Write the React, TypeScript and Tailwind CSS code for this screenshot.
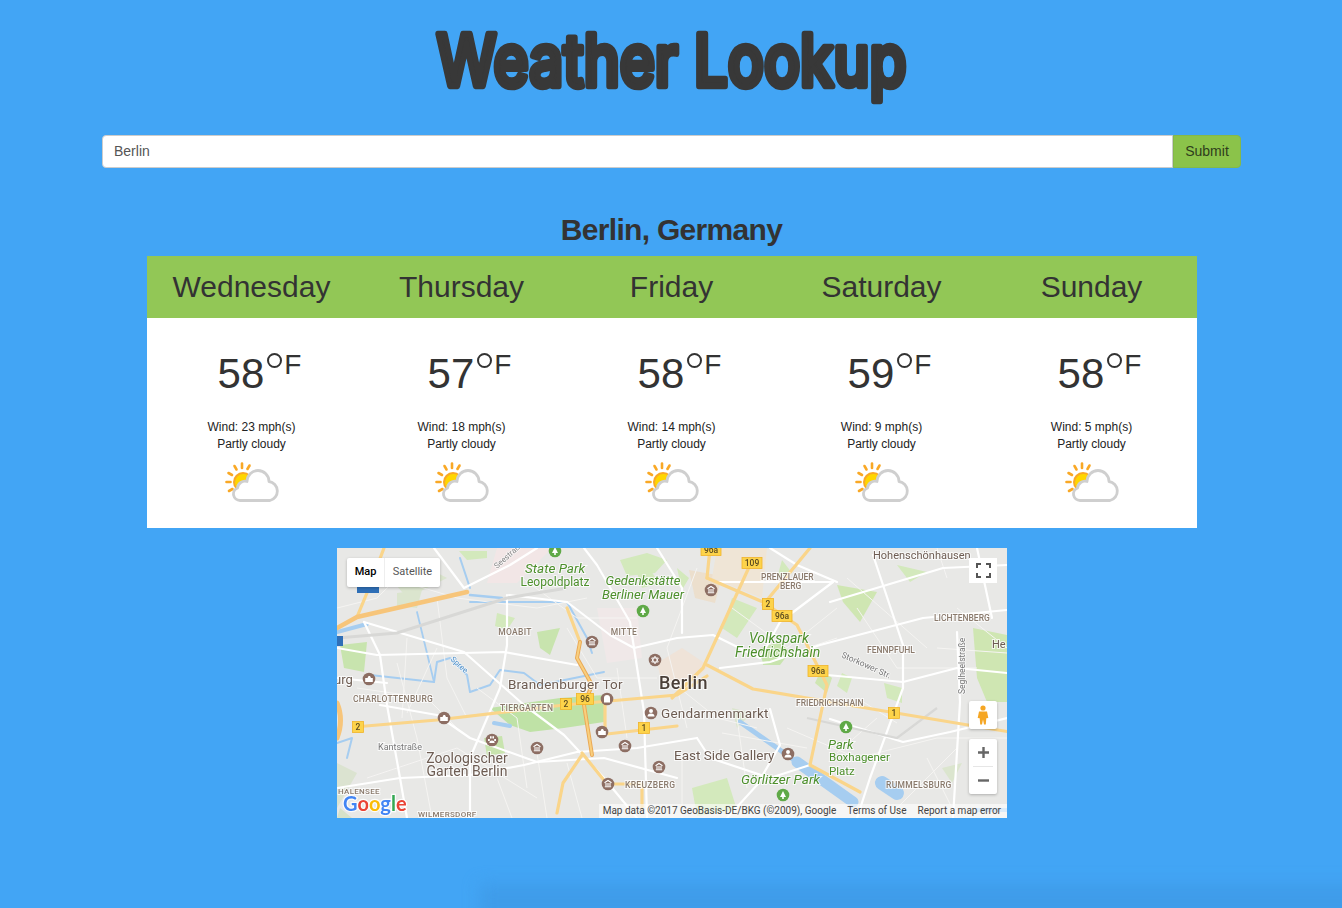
import React from "react";

const days = [
  { d: "Wednesday", t: 58, w: 23 },
  { d: "Thursday", t: 57, w: 18 },
  { d: "Friday", t: 58, w: 14 },
  { d: "Saturday", t: 59, w: 9 },
  { d: "Sunday", t: 58, w: 5 },
];

function WeatherIcon() {
  const rays = ["M1.5 20h4", "M3.5 11l3.5 2", "M9.5 4l2 3.5", "M17 1.5v4.5", "M24.5 3.5l-2 3.5", "M4 29l3.5-2"];
  return (
    <svg width="54" height="40" viewBox="0 0 54 40" className="block">
      {rays.map((r) => (
        <path key={r} d={r} stroke="#f9a825" strokeWidth="2.6" strokeLinecap="round" fill="none" />
      ))}
      <circle cx="18" cy="20" r="10" fill="#f9a825" />
      <circle cx="18.5" cy="20.5" r="8.5" fill="#ffd600" />
      <path
        d="M15 38.5A6.5 6.5 0 0 1 12.5 26A7.5 7.5 0 0 1 22 19.5A11 11 0 0 1 44 19.5A9.7 9.7 0 0 1 45 38.5Z"
        fill="#fff"
        stroke="#cfcfcf"
        strokeWidth="2.8"
        strokeLinejoin="round"
      />
    </svg>
  );
}

const whites = [
  "M27 74L43 107 50 157 63 230 70 270",
  "M170 47L170 97 163 140 133 210 133 270",
  "M97 0L127 40 173 17 200 0",
  "M172 47L230 54",
  "M40 107L167 104 240 117",
  "M27 74L127 104 187 157 227 187 267 230 300 270",
  "M43 157L100 167 133 190 200 214 267 210 340 230",
  "M63 230L133 227 187 217 240 204",
  "M297 100L307 164 310 270",
  "M230 54L273 87 297 100 340 90 376 87 423 110",
  "M247 0L260 17 293 74 297 100",
  "M383 120L433 114 483 97 586 70 670 62",
  "M536 7L566 97 566 140 533 230 520 270",
  "M496 34L443 74 423 110",
  "M490 127L566 134 620 120 670 125",
  "M380 34L496 34",
  "M670 17L606 20 493 54",
  "M620 84L623 154 616 270",
  "M433 0L460 17 500 34",
  "M493 171L566 194 613 184 670 170",
  "M433 161L443 197 420 237",
  "M360 190L373 210 433 230 473 217",
  "M0 100L40 107",
  "M0 240L63 230",
  "M0 130L50 135",
  "M320 0L345 40 345 85",
  "M640 0L655 70",
  "M240 204L300 200 360 190",
  "M420 237L390 270",
];

const thin = [
  "M20 20L120 50 200 60 250 50",
  "M100 50L110 130 130 170",
  "M60 115L80 190 95 270",
  "M230 80L260 130 320 130",
  "M360 20L330 100 350 180",
  "M520 60L560 120 640 120",
  "M450 180L520 210 600 190 670 190",
  "M590 210L620 270",
  "M30 230L120 200 200 250",
  "M395 60L450 100 500 60",
  "M185 30L240 70 300 70",
  "M140 140L180 170 190 240",
  "M100 100L70 165",
  "M400 170L410 240",
  "M620 60L670 100",
  "M0 60L40 50 70 20",
  "M70 90L65 170",
  "M200 205L210 270",
  "M20 140L90 150 120 180",
  "M280 120L290 190",
  "M385 185L470 200",
  "M510 30L590 100",
  "M610 30L600 0",
  "M440 110L500 90",
  "M500 205L540 170",
  "M560 260L620 200",
  "M330 130L380 170 420 180",
  "M345 205L345 270",
  "M160 230L175 270",
  "M230 215L245 270",
  "M600 100L670 105",
  "M520 150L560 175",
];

const parks: [string, string][] = [
  ["M3 97L30 94 27 124 7 120z", "#c8e4ae"],
  ["M200 84L223 80 213 107 203 100z", "#c8e4ae"],
  ["M153 160L223 150 267 147 267 174 227 180 193 184 173 177z", "#bfe2a6"],
  ["M147 190L165 188 168 205 150 208z", "#c8e4ae"],
  ["M423 100L443 94 453 104 443 117 426 117z", "#c8e4ae"],
  ["M500 37L540 44 523 74 506 54z", "#cfe6b2"],
  ["M636 80L670 87 670 154 650 154 640 130z", "#cfe6b2"],
  ["M560 17L590 24 573 34z", "#d3e9bc"],
  ["M283 12L310 5 330 12 318 25 290 28z", "#d3e9bc"],
  ["M122 3L150 3 150 10 130 12z", "#d3e9bc"],
  ["M55 32L95 22 110 30 70 50z", "#dbe5ce"],
  ["M340 20L352 30 345 42z", "#d3e9bc"],
  ["M3 260L15 270 0 270z", "#d6e2c8"],
  ["M485 120L495 130 490 145 478 135z", "#cfe6b2"],
  ["M352 22L385 28 378 55 358 50z", "#ecdfcd"],
  ["M0 215L20 225 0 260z", "#dbe3d0"],
  ["M355 240L390 230 400 262 360 268z", "#d3e9bc"],
  ["M395 50L420 60 400 90 385 80z", "#d3e9bc"],
  ["M505 125L515 130 510 145 500 138z", "#d3e9bc"],
  ["M547 135L565 140 565 155 550 150z", "#d3e9bc"],
  ["M445 12L455 25 440 30z", "#d3e9bc"],
  ["M300 25L312 20 322 35 305 40z", "#d3e9bc"],
  ["M160 65L178 70 170 82 158 78z", "#d3e9bc"],
  ["M60 45L85 42 80 60 60 58z", "#dbe5ce"],
  ["M395 160L415 165 400 180z", "#dbe5ce"],
  ["M605 220L625 215 615 235z", "#dbe5ce"],
];

const labels: { x: number; y: number; t: string; c: string; s: number; a?: "middle"; i?: boolean; w?: number; ls?: number }[] = [
  { x: 218, y: 25, t: "State Park", c: "#4d8f2c", s: 13.5, a: "middle", i: true },
  { x: 218, y: 38, t: "Leopoldplatz", c: "#4d8f2c", s: 12, a: "middle" },
  { x: 306, y: 37, t: "Gedenkstätte", c: "#4d8f2c", s: 13, a: "middle", i: true },
  { x: 306, y: 51, t: "Berliner Mauer", c: "#4d8f2c", s: 13, a: "middle", i: true },
  { x: 178, y: 87, t: "MOABIT", c: "#8a7a6c", s: 8.5, a: "middle", w: 500, ls: 0.3 },
  { x: 287, y: 87, t: "MITTE", c: "#8a7a6c", s: 8.5, a: "middle", w: 500, ls: 0.3 },
  { x: -3, y: 136, t: "urg", c: "#6d5c52", s: 13 },
  { x: 16, y: 154, t: "CHARLOTTENBURG", c: "#8a7a6c", s: 8.5, w: 500, ls: 0.3 },
  { x: 171, y: 141, t: "Brandenburger Tor", c: "#6d5c52", s: 13.5, ls: 0.2 },
  { x: 163, y: 163, t: "TIERGARTEN", c: "#8a7a6c", s: 8.5, w: 500, ls: 0.3 },
  { x: 41, y: 202, t: "Kantstraße", c: "#777", s: 9 },
  { x: 130, y: 215, t: "Zoologischer", c: "#6d5c52", s: 14, a: "middle" },
  { x: 130, y: 228, t: "Garten Berlin", c: "#6d5c52", s: 14, a: "middle" },
  { x: 1, y: 246, t: "HALENSEE", c: "#8a7a6c", s: 8, w: 500, ls: 0.3 },
  { x: 81, y: 269, t: "WILMERSDORF", c: "#8a7a6c", s: 8, w: 500, ls: 0.3 },
  { x: 288, y: 240, t: "KREUZBERG", c: "#8a7a6c", s: 8.5, w: 500, ls: 0.3 },
  { x: 322, y: 141, t: "Berlin", c: "#4a3f38", s: 18, w: 500, ls: 0.4 },
  { x: 324, y: 170, t: "Gendarmenmarkt", c: "#6d5c52", s: 13.5, ls: 0.2 },
  { x: 337, y: 212, t: "East Side Gallery", c: "#6d5c52", s: 13.5 },
  { x: 404, y: 236, t: "Görlitzer Park", c: "#4d8f2c", s: 13.5, i: true },
  { x: 412, y: 95, t: "Volkspark", c: "#4d8f2c", s: 14, i: true },
  { x: 398, y: 109, t: "Friedrichshain", c: "#4d8f2c", s: 14, i: true },
  { x: 491, y: 201, t: "Park", c: "#4d8f2c", s: 13, i: true },
  { x: 492, y: 213, t: "Boxhagener", c: "#4d8f2c", s: 11.5 },
  { x: 492, y: 227, t: "Platz", c: "#4d8f2c", s: 11.5 },
  { x: 424, y: 32, t: "PRENZLAUER", c: "#8a7a6c", s: 8.5, w: 500 },
  { x: 443, y: 41, t: "BERG", c: "#8a7a6c", s: 8.5, w: 500 },
  { x: 530, y: 105, t: "FENNPFUHL", c: "#8a7a6c", s: 8.5, w: 500 },
  { x: 459, y: 158, t: "FRIEDRICHSHAIN", c: "#8a7a6c", s: 8.5, w: 500 },
  { x: 549, y: 240, t: "RUMMELSBURG", c: "#8a7a6c", s: 8.5, w: 500, ls: 0.3 },
  { x: 597, y: 73, t: "LICHTENBERG", c: "#8a7a6c", s: 8.5, w: 500 },
  { x: 536, y: 11, t: "Hohenschönhausen", c: "#6d5c52", s: 11 },
  { x: 655, y: 100, t: "He", c: "#6d5c52", s: 11 },
];

const pois: [number, number, string][] = [
  [255, 94, "m"], [318, 112, "s"], [32, 131, "c"], [107, 170, "c"], [155, 192, "p"], [200, 200, "m"],
  [270, 151, "t"], [314, 165, "g"], [265, 184, "c"], [288, 198, "m"], [322, 219, "m"], [271, 236, "m"], [374, 42, "m"], [451, 206, "g"],
];

function Poi({ x, y, k }: { x: number; y: number; k: string }) {
  return (
    <g>
      <circle cx={x} cy={y} r="6.3" fill="#8d6e63" />
      {k === "m" && <path d={`M${x - 3.5} ${y - 1.2}L${x} ${y - 3.5}L${x + 3.5} ${y - 1.2}M${x - 3.2} ${y + 2.8}H${x + 3.2}M${x - 2} ${y - 1}V${y + 2}M${x} ${y - 1}V${y + 2}M${x + 2} ${y - 1}V${y + 2}`} stroke="#fff" strokeWidth="1.1" fill="none" />}
      {k === "s" && <path d={`M${x} ${y - 3.8}L${x + 3.3} ${y + 2}H${x - 3.3}zM${x} ${y + 3.8}L${x + 3.3} ${y - 2}H${x - 3.3}z`} stroke="#fff" strokeWidth="0.9" fill="none" />}
      {k === "c" && <path d={`M${x - 3.8} ${y + 3}V${y - 1}H${x - 1.5}L${x - 0.5} ${y - 3}H${x + 1}L${x + 2} ${y - 1}H${x + 3.8}V${y + 3}z`} fill="#fff" />}
      {k === "p" && <path d={`M${x - 2.6} ${y + 3}a2.6 2.4 0 0 1 5.2 0zM${x - 4} ${y - 1}h1.8v2h-1.8zM${x + 2.2} ${y - 1}h1.8v2h-1.8zM${x - 2} ${y - 3.8}h1.6v2.2h-1.6zM${x + 0.4} ${y - 3.8}h1.6v2.2h-1.6z`} fill="#fff" />}
      {k === "t" && <path d={`M${x - 3} ${y + 3.5}V${y - 1}A3 3 0 0 1 ${x + 3} ${y - 1}V${y + 3.5}z`} fill="#fff" />}
      {k === "g" && <path d={`M${x - 3.5} ${y + 3.5}a3.5 3 0 0 1 7 0zM${x - 2} ${y - 2}a2 2 0 1 0 4 0a2 2 0 1 0-4 0z`} fill="#fff" />}
    </g>
  );
}

function Tree({ x, y }: { x: number; y: number }) {
  return (
    <g>
      <circle cx={x} cy={y} r="6.3" fill="#5fa947" />
      <path d={`M${x} ${y - 4}L${x + 3} ${y + 2}H${x + 0.8}V${y + 4}H${x - 0.8}V${y + 2}H${x - 3}z`} fill="#fff" />
    </g>
  );
}

function Shield({ x, y, t }: { x: number; y: number; t: string }) {
  const w = t.length > 2 ? 20 : t.length === 2 ? 17 : 11;
  return (
    <g>
      <rect x={x - w / 2} y={y - 5.5} width={w} height="11" fill="#fdd34a" stroke="#f0b429" strokeWidth="0.8" />
      <text x={x} y={y + 3} textAnchor="middle" fontSize="8.5" fill="#5a4a20" fontFamily="Roboto, sans-serif" fontWeight="500">{t}</text>
    </g>
  );
}

function MapArt() {
  const haloText = { stroke: "#fff", strokeOpacity: 0.7, strokeWidth: 1.5, paintOrder: "stroke" as const };
  return (
    <svg width="670" height="270" viewBox="0 0 670 270" className="absolute inset-0 block blur-[0.45px]" fontFamily="Roboto, sans-serif">
      <rect width="670" height="270" fill="#e8e8e6" />
      {parks.map(([d, c], i) => <path key={i} d={d} fill={c} />)}
      <path d="M160 0L215 0 180 35 150 35z" fill="#f2e6e6" />
      <path d="M260 60L300 60 305 110 270 115z" fill="#f0e8e8" />
      <path d="M320 115L345 100 372 118 350 140 325 135z" fill="#efe3d8" />
      <path d="M380 0L430 0 425 50 375 30z" fill="#efe5d6" />
      <g fill="none" stroke="#a6cdf0" strokeLinejoin="round" strokeLinecap="round">
        <path d="M33 127L97 134 100 114 113 110 130 127 133 144 153 137 163 122 187 125 203 137 267 124" strokeWidth="2" />
        <path d="M80 64L97 134" strokeWidth="1.8" />
        <path d="M123 10L133 40M133 54L167 54 230 54 250 90 255 105" strokeWidth="2" />
        <path d="M133 47L165 50" strokeWidth="2.5" />
        <path d="M157 175L173 178" strokeWidth="4" />
        <path d="M0 195L15 190 10 210" strokeWidth="2" />
        <path d="M0 84L30 76" strokeWidth="4" />
        <path d="M403 174L460 214" strokeWidth="5" />
        <path d="M460 214L516 254" strokeWidth="11" />
        <path d="M545 235L560 245" strokeWidth="14" />
        <path d="M640 262L670 262" strokeWidth="4" />
      </g>
      <g fill="none" stroke="#f5f4f2" strokeWidth="1">
        {thin.map((d) => <path key={d} d={d} />)}
      </g>
      <g fill="none" stroke="#fff" strokeWidth="2.2" strokeLinejoin="round" strokeLinecap="round">
        {whites.map((d) => <path key={d} d={d} />)}
      </g>
      <path d="M470 170L560 190 600 160" fill="none" stroke="#d8d8d6" strokeWidth="2.2" />
      <path d="M0 90L60 85 170 50 230 40" fill="none" stroke="#d8d8d6" strokeWidth="3" />
      <g fill="none" stroke="#fad58a" strokeWidth="3.2" strokeLinejoin="round" strokeLinecap="round">
        <path d="M47 0L32 40 20 69" />
        <path d="M17 179L100 172 227 157 340 147 370 128" />
        <path d="M370 117L416 141 553 164 673 184" />
        <path d="M370 30L426 54 460 77 490 137 473 217 523 244" />
        <path d="M413 17L366 120 335 150" />
        <path d="M373 0L370 30" />
        <path d="M473 0L426 57" />
        <path d="M245 205L270 236 305 236 305 260" />
        <path d="M220 265L226 235 245 207" />
        <path d="M268 150L268 185M270 186L340 178" />
        <path d="M230 60L243 94" />
      </g>
      <g fill="none" strokeLinejoin="round" strokeLinecap="round">
        <path d="M0 80L20 69 130 44" stroke="#f7c57a" strokeWidth="4.5" />
        <path d="M0 155Q7 172 0 190" stroke="#f7c57a" strokeWidth="5" />
        <path d="M243 94L240 110 255 137 247 157 255 207" stroke="#eaa956" strokeWidth="4" />
        <path d="M243 94L240 110 255 137 247 157 255 207" stroke="#f9cf7e" strokeWidth="2" />
      </g>
      {labels.map((l) => (
        <text
          key={l.t + l.x}
          x={l.x}
          y={l.y}
          fontSize={l.s}
          fill={l.c}
          textAnchor={l.a}
          fontStyle={l.i ? "italic" : undefined}
          fontWeight={l.w}
          letterSpacing={l.ls}
          stroke="#fff"
          strokeOpacity="0.75"
          strokeWidth="2"
          paintOrder="stroke"
        >
          {l.t}
        </text>
      ))}
      <text transform="translate(113 112) rotate(42)" fontSize="8" fill="#4e8fc9" {...haloText}>Spree</text>
      <text transform="translate(160 21) rotate(-42)" fontSize="8" fill="#888" {...haloText}>Seestraße</text>
      <text transform="translate(504 109) rotate(24)" fontSize="8.5" fill="#777" {...haloText}>Storkower Str.</text>
      <text transform="translate(628 146) rotate(-90)" fontSize="8.5" fill="#777" {...haloText}>Seglheelstraße</text>
      {pois.map(([x, y, k], i) => <Poi key={i} x={x} y={y} k={k} />)}
      <Tree x={218} y={3} />
      <Tree x={306} y={63} />
      <Tree x={509} y={179} />
      <Tree x={446} y={247} />
      <Shield x={21} y={179} t="2" />
      <Shield x={229} y={156} t="2" />
      <Shield x={248} y={151} t="96" />
      <Shield x={307} y={180} t="1" />
      <Shield x={374} y={2} t="96a" />
      <Shield x={415} y={15} t="109" />
      <Shield x={431} y={56} t="2" />
      <Shield x={445} y={68} t="96a" />
      <Shield x={481} y={123} t="96a" />
      <Shield x={557} y={165} t="1" />
      <rect x="0" y="88" width="6" height="10" fill="#2f6fb7" />
      <rect x="20" y="39" width="22" height="6" fill="#2f6fb7" />
      <text x="6" y="263" fontSize="20" fontFamily="Lato, sans-serif" fontWeight="700" stroke="#fff" strokeOpacity="0.85" strokeWidth="2.5" paintOrder="stroke">
        <tspan fill="#4285f4">G</tspan><tspan fill="#ea4335">o</tspan><tspan fill="#fbbc05">o</tspan><tspan fill="#4285f4">g</tspan><tspan fill="#34a853">l</tspan><tspan fill="#ea4335">e</tspan>
      </text>
    </svg>
  );
}

export default function App() {
  return (
    <div className="relative min-h-[908px] overflow-hidden bg-[#42a5f5] font-['Liberation_Sans',Arial,sans-serif] text-[#333]">
      <div className="ml-[102px] w-[1139px] pt-[17px]">
        <h1 className="m-0 h-[92px] text-center">
          <svg width="1139" height="92" viewBox="0 0 1139 92" className="block">
            <text
              x="569.5"
              y="69"
              textAnchor="middle"
              textLength="470"
              lengthAdjust="spacingAndGlyphs"
              fontFamily="Inter, sans-serif"
              fontWeight="500"
              fontSize="72"
              fill="#383838"
              stroke="#383838"
              strokeWidth="6.5"
              strokeLinejoin="round"
              strokeLinecap="round"
            >
              Weather Lookup
            </text>
          </svg>
        </h1>
        <div className="mt-[26px] flex h-[33px]">
          <div className="flex flex-1 items-center rounded-l-[4px] border border-[#ccc] bg-white pl-[11px] text-[14px] text-[#555]">Berlin</div>
          <button className="w-[68px] rounded-r-[4px] border border-[#84b84a] bg-[#8bc34a] text-[14px] text-[#2f3d1c]">Submit</button>
        </div>
        <h2 className="mt-[44px] text-center text-[30px] font-bold leading-[36px] tracking-[-0.7px] text-[#333]">Berlin, Germany</h2>
      </div>
      <div className="ml-[147px] mt-[8px] w-[1050px]">
        <div className="grid h-[62px] grid-cols-5 bg-[#92c756]">
          {days.map((x) => (
            <div key={x.d} className="flex items-center justify-center pb-[1px] pr-[1px] text-[30px] text-[#333]">{x.d}</div>
          ))}
        </div>
        <div className="grid h-[210px] grid-cols-5 bg-white">
          {days.map((x) => (
            <div key={x.d} className="flex flex-col items-center">
              <div className="mt-[27px] flex h-[54px] items-start pl-[15px] leading-none">
                <span className="mt-[4px] text-[42px] leading-[50px]">{x.t}</span>
                <span className="ml-[3px] mt-[8px] h-[15px] w-[15px] rounded-full border-2 border-[#333]"></span>
                <span className="ml-[2px] mt-[6px] text-[28px] leading-[28px]">F</span>
              </div>
              <div className="mt-[20px] text-center text-[12px] leading-[17px] text-[#222]">
                <div className="pr-[1px]">Wind: {x.w} mph(s)</div>
                <div className="pr-[1px]">Partly cloudy</div>
              </div>
              <div className="mt-[9px] pr-[1px]"><WeatherIcon /></div>
            </div>
          ))}
        </div>
      </div>
      <div className="relative ml-[337px] mt-[20px] h-[270px] w-[670px] overflow-hidden font-['Roboto',sans-serif]">
        <MapArt />
        <div className="absolute left-[10px] top-[10px] flex h-[29px] rounded-[2px] bg-white text-[11px] shadow-[0_1px_3px_rgba(0,0,0,0.25)]">
          <div className="flex w-[37px] items-center justify-center font-medium text-black">Map</div>
          <div className="flex w-[56px] items-center justify-center border-l border-[#eee] text-[#565656]">Satellite</div>
        </div>
        <div className="absolute right-[10px] top-[10px] flex h-[25px] w-[28px] items-center justify-center bg-white">
          <svg width="15" height="15" viewBox="0 0 15 15" fill="none" stroke="#555" strokeWidth="2"><path d="M1 5V1H5M10 1H14V5M14 10V14H10M5 14H1V10" /></svg>
        </div>
        <div className="absolute right-[10px] top-[153px] flex h-[28px] w-[28px] items-center justify-center rounded-[2px] bg-white shadow-[0_1px_3px_rgba(0,0,0,0.25)]">
          <svg width="12" height="20" viewBox="0 0 12 20"><circle cx="6" cy="3" r="2.6" fill="#f5a623" /><path d="M2 6.5h8l1.3 6.5-2 .3-.5 6.2H7l-1-5-1 5H3.2l-.5-6.2-2-.3z" fill="#f5a623" /></svg>
        </div>
        <div className="absolute right-[10px] top-[191px] flex h-[55px] w-[28px] flex-col items-center rounded-[2px] bg-white shadow-[0_1px_3px_rgba(0,0,0,0.25)]">
          <div className="flex h-[27px] w-full items-center justify-center">
            <svg width="11" height="11" viewBox="0 0 11 11"><path d="M0 5.5h11M5.5 0v11" stroke="#666" strokeWidth="2.4" /></svg>
          </div>
          <div className="h-px w-[20px] bg-[#e6e6e6]"></div>
          <div className="flex h-[27px] w-full items-center justify-center">
            <svg width="11" height="11" viewBox="0 0 11 11"><path d="M0 5.5h11" stroke="#666" strokeWidth="2.4" /></svg>
          </div>
        </div>
        <div className="absolute bottom-0 right-0 flex h-[14px] items-center gap-[11px] whitespace-nowrap bg-white/60 pl-[4px] pr-[6px] text-[10px] leading-[14px] text-[#444]">
          <span>Map data ©2017 GeoBasis-DE/BKG (©2009), Google</span>
          <span>Terms of Use</span>
          <span>Report a map error</span>
        </div>
      </div>
      <div className="absolute bottom-[-10px] left-[480px] right-[-20px] h-[34px] bg-[#3f9ce9] blur-[8px]"></div>
    </div>
  );
}
